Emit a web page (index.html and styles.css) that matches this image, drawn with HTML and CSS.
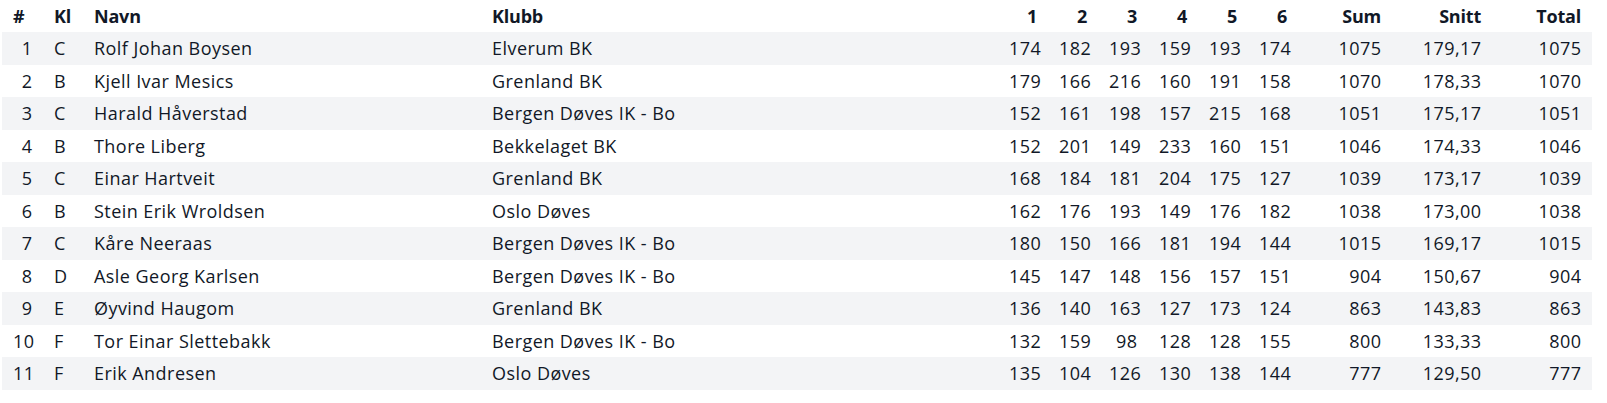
FILE: index.html
```html
<!DOCTYPE html>
<html lang="no">
<head>
<meta charset="utf-8">
<title>Resultater</title>
<link rel="stylesheet" href="styles.css">
</head>
<body>
<table class="results">
  <colgroup>
    <col class="c-pos"><col class="c-kl"><col class="c-navn"><col class="c-klubb">
    <col class="c-s"><col class="c-s"><col class="c-s"><col class="c-s"><col class="c-s"><col class="c-s">
    <col class="c-sum"><col class="c-snitt"><col class="c-total">
  </colgroup>
  <thead>
    <tr>
      <th class="l">#</th><th class="l">Kl</th><th class="l">Navn</th><th class="l">Klubb</th>
      <th>1</th><th>2</th><th>3</th><th>4</th><th>5</th><th>6</th>
      <th>Sum</th><th>Snitt</th><th>Total</th>
    </tr>
  </thead>
  <tbody>
    <tr><td>1</td><td class="l">C</td><td class="l">Rolf Johan Boysen</td><td class="l">Elverum BK</td><td>174</td><td>182</td><td>193</td><td>159</td><td>193</td><td>174</td><td>1075</td><td>179,17</td><td>1075</td></tr>
    <tr><td>2</td><td class="l">B</td><td class="l">Kjell Ivar Mesics</td><td class="l">Grenland BK</td><td>179</td><td>166</td><td>216</td><td>160</td><td>191</td><td>158</td><td>1070</td><td>178,33</td><td>1070</td></tr>
    <tr><td>3</td><td class="l">C</td><td class="l">Harald Håverstad</td><td class="l">Bergen Døves IK - Bo</td><td>152</td><td>161</td><td>198</td><td>157</td><td>215</td><td>168</td><td>1051</td><td>175,17</td><td>1051</td></tr>
    <tr><td>4</td><td class="l">B</td><td class="l">Thore Liberg</td><td class="l">Bekkelaget BK</td><td>152</td><td>201</td><td>149</td><td>233</td><td>160</td><td>151</td><td>1046</td><td>174,33</td><td>1046</td></tr>
    <tr><td>5</td><td class="l">C</td><td class="l">Einar Hartveit</td><td class="l">Grenland BK</td><td>168</td><td>184</td><td>181</td><td>204</td><td>175</td><td>127</td><td>1039</td><td>173,17</td><td>1039</td></tr>
    <tr><td>6</td><td class="l">B</td><td class="l">Stein Erik Wroldsen</td><td class="l">Oslo Døves</td><td>162</td><td>176</td><td>193</td><td>149</td><td>176</td><td>182</td><td>1038</td><td>173,00</td><td>1038</td></tr>
    <tr><td>7</td><td class="l">C</td><td class="l">Kåre Neeraas</td><td class="l">Bergen Døves IK - Bo</td><td>180</td><td>150</td><td>166</td><td>181</td><td>194</td><td>144</td><td>1015</td><td>169,17</td><td>1015</td></tr>
    <tr><td>8</td><td class="l">D</td><td class="l">Asle Georg Karlsen</td><td class="l">Bergen Døves IK - Bo</td><td>145</td><td>147</td><td>148</td><td>156</td><td>157</td><td>151</td><td>904</td><td>150,67</td><td>904</td></tr>
    <tr><td>9</td><td class="l">E</td><td class="l">Øyvind Haugom</td><td class="l">Grenland BK</td><td>136</td><td>140</td><td>163</td><td>127</td><td>173</td><td>124</td><td>863</td><td>143,83</td><td>863</td></tr>
    <tr><td>10</td><td class="l">F</td><td class="l">Tor Einar Slettebakk</td><td class="l">Bergen Døves IK - Bo</td><td>132</td><td>159</td><td>98</td><td>128</td><td>128</td><td>155</td><td>800</td><td>133,33</td><td>800</td></tr>
    <tr><td>11</td><td class="l">F</td><td class="l">Erik Andresen</td><td class="l">Oslo Døves</td><td>135</td><td>104</td><td>126</td><td>130</td><td>138</td><td>144</td><td>777</td><td>129,50</td><td>777</td></tr>
  </tbody>
</table>
</body>
</html>
```

FILE: styles.css
```css
html, body {
  margin: 0;
  padding: 0;
  background: #ffffff;
}

body {
  font-family: "Open Sans", "Noto Sans", sans-serif;
  font-size: 18px;
  color: #111827;
}

.results {
  margin-left: 2px;
  width: 1590px;
  table-layout: fixed;
  border-collapse: collapse;
  border-spacing: 0;
}

.c-pos { width: 41px; }
.c-kl { width: 40px; }
.c-navn { width: 398px; }
.c-klubb { width: 517px; }
.c-s { width: 50px; }
.c-sum { width: 94px; }
.c-snitt { width: 100px; }
.c-total { width: 100px; }

.results th,
.results td {
  padding: 0 11px;
  text-align: right;
  white-space: nowrap;
  overflow: hidden;
  line-height: 24px;
}

.results th {
  height: 32px;
  font-weight: 700;
  letter-spacing: -0.2px;
}

.results td {
  height: 32.5px;
  letter-spacing: 0.45px;
  padding-right: 10.5px;
}

.results td.l {
  padding-right: 11px;
}

.results .l {
  text-align: left;
}

.results tbody tr:nth-child(odd) {
  background: #f3f4f6;
}
```
